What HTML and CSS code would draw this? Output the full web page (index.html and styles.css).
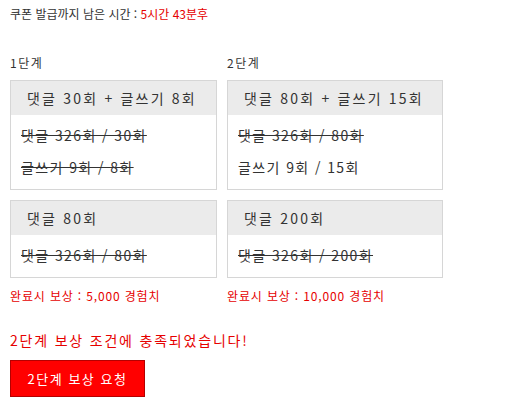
FILE: index.html
```html
<!DOCTYPE html>
<html lang="ko">
<head>
<meta charset="utf-8">
<link rel="stylesheet" href="styles.css">
</head>
<body>
<div class="page">
  <p class="timer">쿠폰 발급까지 남은 시간 : <span class="red">5시간 43분후</span></p>
  <div class="grid">
    <div class="col">
      <div class="label">1단계</div>
      <div class="box">
        <div class="head">댓글 30회 + 글쓰기 8회</div>
        <div class="body">
          <div class="row done">댓글 326회 / 30회</div>
          <div class="row done">글쓰기 9회 / 8회</div>
        </div>
      </div>
    </div>
    <div class="col">
      <div class="label">2단계</div>
      <div class="box">
        <div class="head">댓글 80회 + 글쓰기 15회</div>
        <div class="body">
          <div class="row done">댓글 326회 / 80회</div>
          <div class="row">글쓰기 9회 / 15회</div>
        </div>
      </div>
    </div>
    <div class="col">
      <div class="box">
        <div class="head">댓글 80회</div>
        <div class="body">
          <div class="row done">댓글 326회 / 80회</div>
        </div>
      </div>
      <div class="reward">완료시 보상 : 5,000 경험치</div>
    </div>
    <div class="col">
      <div class="box">
        <div class="head">댓글 200회</div>
        <div class="body">
          <div class="row done">댓글 326회 / 200회</div>
        </div>
      </div>
      <div class="reward">완료시 보상 : 10,000 경험치</div>
    </div>
  </div>
  <p class="notice">2단계 보상 조건에 충족되었습니다!</p>
  <button class="btn">2단계 보상 요청</button>
</div>
</body>
</html>
```
FILE: styles.css
```css
html, body {
  margin: 0;
  padding: 0;
  background: #fff;
}
body {
  font-family: "Noto Sans CJK KR", "Noto Sans", sans-serif;
  color: #333;
}
.page {
  padding: 6px 10px 0 10px;
}
.timer {
  margin: 0;
  font-size: 12px;
  line-height: 16px;
}
.red {
  color: #e60000;
}
.grid {
  margin-top: 33px;
  display: grid;
  grid-template-columns: 207px 216px;
  column-gap: 10px;
  row-gap: 10px;
}
.label {
  font-size: 12px;
  line-height: 16px;
  margin-bottom: 9px;
  letter-spacing: 1.5px;
}
.box {
  border: 1px solid #d6d6d6;
}
.head {
  background: #ebebeb;
  font-size: 14px;
  line-height: 34px;
  padding-left: 16px;
  letter-spacing: 2.2px;
}
.body {
  padding: 6px 0 7px 10px;
}
.row {
  font-size: 14px;
  line-height: 29px;
  letter-spacing: 1.4px;
}
.row + .row {
  margin-top: 3px;
}
.done {
  text-decoration: line-through;
}
.reward {
  margin-top: 10px;
  font-size: 12px;
  line-height: 16px;
  color: #e60000;
  letter-spacing: 0.85px;
}
.notice {
  margin: 27px 0 0 0;
  font-size: 14px;
  line-height: 18px;
  color: #e60000;
  letter-spacing: 1.8px;
}
.btn {
  margin-top: 11px;
  width: 135px;
  height: 37px;
  background: #ff0000;
  border: 1px solid #b50000;
  color: #fff;
  font-family: "Noto Sans CJK KR", "Noto Sans", sans-serif;
  font-size: 13px;
  letter-spacing: 1.5px;
  padding: 0;
}
```
